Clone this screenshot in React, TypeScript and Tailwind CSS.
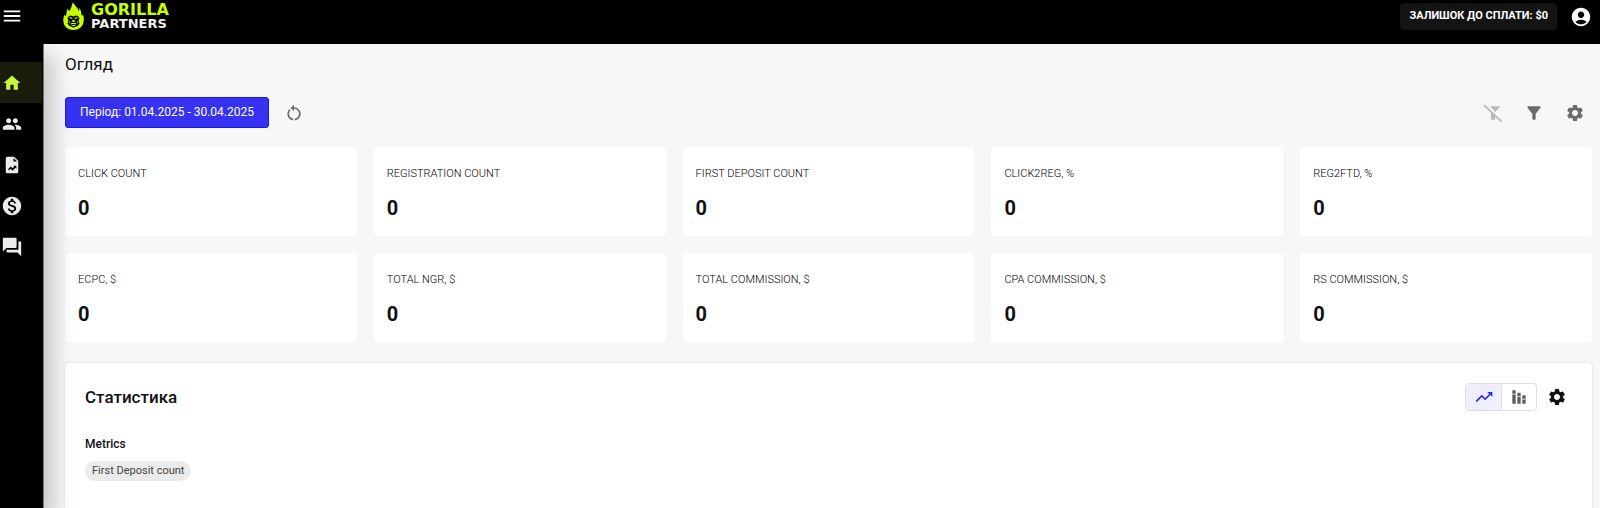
import type { ReactNode } from "react";
import {
  MdAccountCircle,
  MdFilterAlt,
  MdForum,
  MdHome,
  MdMenu,
  MdMonetizationOn,
  MdPeople,
  MdRestartAlt,
  MdSettings,
  MdStackedBarChart,
  MdTrendingUp,
} from "react-icons/md";

const metrics = [
  "Click count",
  "Registration count",
  "First deposit count",
  "Click2Reg, %",
  "Reg2FTD, %",
  "eCPC, $",
  "Total NGR, $",
  "Total commission, $",
  "CPA commission, $",
  "RS commission, $",
];

function ReportIcon() {
  return (
    <svg viewBox="0 0 24 24" width="20" height="20" fill="currentColor" aria-hidden="true">
      <path
        fillRule="evenodd"
        d="M14.5 2H6.5A2 2 0 0 0 4.500 4v16a2 2 0 0 0 2 2h11a2 2 0 0 0 2-2V7zM13.800 3.600 18 7.900h-4.200zM8.600 18.400 7.200 17l3.300-3.300 2.200 2.100 1.900-1.900-1-1h3.600v3.600l-1.100-1.100-3.400 3.400-2.200-2.200z"
      />
    </svg>
  );
}

function FilterOffIcon() {
  return (
    <svg viewBox="0 0 24 24" width="20" height="20" fill="currentColor" aria-hidden="true">
      <path d="M8.600 4H21l-6.300 6.900z" />
      <path d="M9.500 11.600V20h5v-3.600z" />
      <path d="m0.500 3.200 1.500-1.500L23 21.600 21.500 23z" />
    </svg>
  );
}

function FlameLogo() {
  return (
    <svg viewBox="0 0 42 56" className="h-7 w-[21px]" aria-hidden="true">
      <path
        fill="#c6ff00"
        d="M20 0c1 6 10 10 11 18 2-1 2-4 1-7 5 5 4 11 5 15 1 2 2 1 3-1 2 5 2 11 1 16-2 9-10 15-20 15S2 50 1 41c-1-6 0-11 2-16 1 3 2 4 3 2 2-5 0-9 4-14 0 3 1 5 3 5C17 12 17 7 20 0z"
      />
      <path
        fill="#000"
        d="M12 28l4-1 5 2 5-2 4 1 3 5-2 4 2 6-4 5-8 3-8-3-4-5 2-6-2-4z"
      />
      <path
        fill="#c6ff00"
        d="M14 30l5 2v2l-7-2zM28 30l-5 2v2l7-2zM19 36h4l2 4h-8zM12 38l3 2-2 3zM30 38l-3 2 2 3zM15 43l3-1h6l3 1-3 5h-6z"
      />
      <path fill="#000" d="M17 44h8v2h-8zM18 38h2v1h-2zM22 38h2v1h-2z" />
    </svg>
  );
}

function NavLink({ label, active = false, children }: { label: string; active?: boolean; children: ReactNode }) {
  return (
    <a
      href="#"
      aria-label={label}
      aria-current={active ? "page" : undefined}
      className={
        active
          ? "flex h-[41px] w-[42px] items-center bg-[#191c09] text-[#c9f53c]"
          : "flex h-[41px] w-[42px] items-center text-[#ececec]"
      }
    >
      <span className="flex w-6 justify-center">{children}</span>
    </a>
  );
}

export default function App() {
  return (
    <div className="flex min-h-screen flex-col bg-[#f7f7f7] font-['Roboto',sans-serif] text-[#111]">
      <header className="relative z-20 flex h-11 items-start justify-between bg-black text-white">
        <div className="flex items-start">
          <button type="button" aria-label="Menu" className="mt-[5px] flex w-6 justify-center">
            <MdMenu size={22} />
          </button>
          <a href="#" className="mt-[2px] ml-[39px] flex items-center gap-[7px]">
            <FlameLogo />
            <span className="flex flex-col font-['DejaVu_Sans',sans-serif] font-bold">
              <span className="text-[16px] leading-[15px] text-[#c6ff00]">GORILLA</span>
              <span className="text-[13px] leading-[13px] text-[#f2f2f2]">PARTNERS</span>
            </span>
          </a>
        </div>
        <div className="mt-[3px] mr-2 flex items-center gap-[13px]">
          <button type="button" className="h-[27px] rounded bg-[#141414] px-[9px] text-[11px] font-bold uppercase">
            Залишок до сплати: $0
          </button>
          <button type="button" aria-label="Account">
            <MdAccountCircle size={22} />
          </button>
        </div>
      </header>

      <div className="flex flex-1">
        <nav className="relative z-10 w-11 shrink-0 border-r border-[#777] bg-black pt-[18px] shadow-[8px_12px_22px_rgba(0,0,0,0.22)]">
          <NavLink label="Home" active>
            <MdHome size={20} />
          </NavLink>
          <NavLink label="Players">
            <MdPeople size={20} />
          </NavLink>
          <NavLink label="Reports">
            <ReportIcon />
          </NavLink>
          <NavLink label="Payments">
            <MdMonetizationOn size={22} />
          </NavLink>
          <NavLink label="Messages">
            <MdForum size={22} />
          </NavLink>
        </nav>

        <main className="flex min-w-0 flex-1 flex-col pt-2 pr-2 pl-[21px]">
          <h1 className="text-[17px] leading-6">Огляд</h1>

          <div className="mt-[21px] flex items-center justify-between">
            <div className="flex items-center gap-[15px]">
              <button
                type="button"
                className="h-[31px] rounded-[3px] border border-[#1c18e0] bg-[#3632f2] px-[14px] pb-[2px] text-[12px] text-white"
              >
                Період: 01.04.2025 - 30.04.2025
              </button>
              <button type="button" aria-label="Reset period" className="text-[#6b6b6b]">
                <MdRestartAlt size={20} />
              </button>
            </div>
            <div className="mr-[7px] flex items-center gap-[21px] text-[#6b6b6b]">
              <button type="button" aria-label="Clear filters" className="text-[#b9b9b9]">
                <FilterOffIcon />
              </button>
              <button type="button" aria-label="Filters">
                <MdFilterAlt size={20} />
              </button>
              <button type="button" aria-label="Settings">
                <MdSettings size={20} />
              </button>
            </div>
          </div>

          <dl className="mt-[19px] grid grid-cols-5 gap-[17px]">
            {metrics.map((name) => (
              <div key={name} className="h-[89px] rounded-[3px] bg-white px-[13px] pt-[18px]">
                <dt className="text-[11px] leading-[18px] font-light text-black uppercase">{name}</dt>
                <dd className="mt-[13px] text-[20px] leading-6 font-bold">0</dd>
              </div>
            ))}
          </dl>

          <section className="mt-[21px] flex-1 rounded-t-[4px] bg-white px-5 pt-5 shadow-[0_0_3px_rgba(0,0,0,0.12)]">
            <div className="flex items-center justify-between">
              <h2 className="text-[17px] leading-7 font-medium">Статистика</h2>
              <div className="mr-[5px] flex items-center gap-[10px]">
                <div className="flex h-7 overflow-hidden rounded border border-[#dedde8]">
                  <button
                    type="button"
                    aria-label="Line chart"
                    className="flex w-9 items-center justify-center border-r border-[#dedde8] bg-[#efeefe] text-[#2b27e6]"
                  >
                    <MdTrendingUp size={20} />
                  </button>
                  <button
                    type="button"
                    aria-label="Bar chart"
                    className="flex w-[34px] items-center justify-center text-[#5c5c5c]"
                  >
                    <MdStackedBarChart size={20} />
                  </button>
                </div>
                <button type="button" aria-label="Chart settings">
                  <MdSettings size={20} />
                </button>
              </div>
            </div>
            <h3 className="mt-[25px] text-[12px] leading-4 font-medium">Metrics</h3>
            <span className="mt-[9px] inline-flex h-5 items-center rounded-full bg-[#ebebeb] px-[7px] text-[11px] text-[#444]">
              First Deposit count
            </span>
          </section>
        </main>
      </div>
    </div>
  );
}
